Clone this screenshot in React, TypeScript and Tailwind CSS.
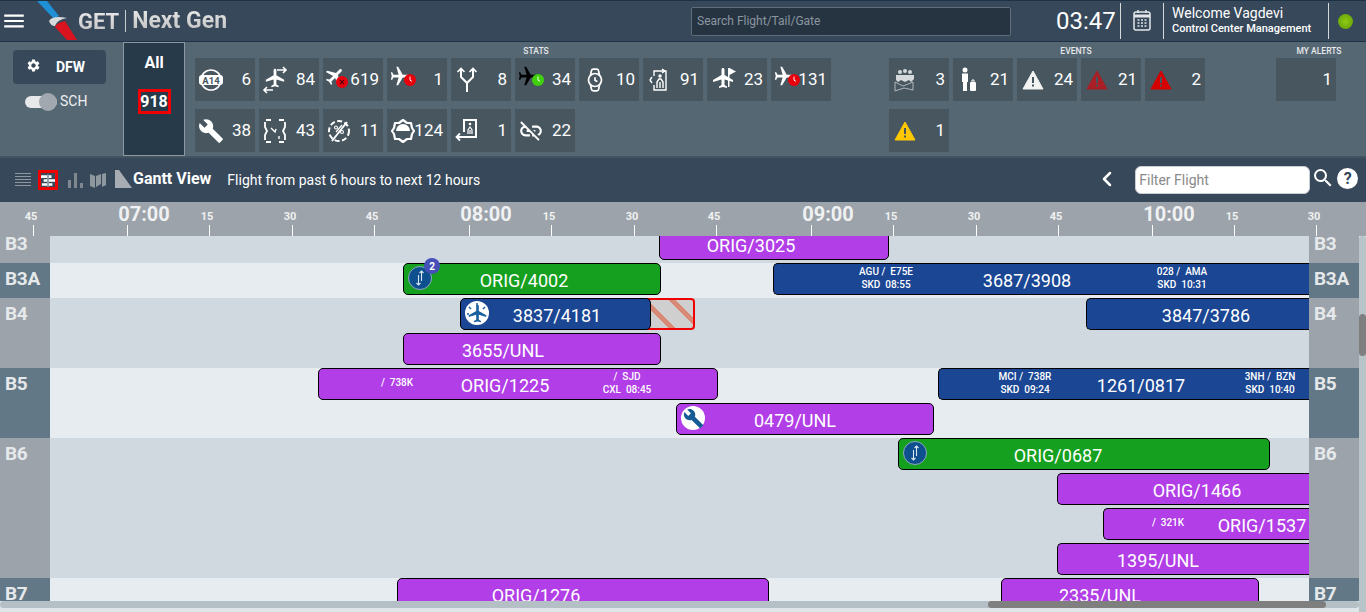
import { ReactNode } from "react";
import { MdBuild, MdLinkOff, MdSearch, MdSettings, MdMenu } from "react-icons/md";
import { ChevronLeft, Watch } from "lucide-react";

const Plane = ({ size, className }: { size: number; className: string }) => (
  <svg width={size} height={size} viewBox="0 0 24 24" className={className} fill="currentColor">
    <path d="M22 16v-2l-8.500-5V3.500C13.500 2.670 12.830 2 12 2s-1.500.670-1.500 1.500V9L2 14v2l8.500-2.500V19L8 20.500V22l4-1 4 1v-1.500L13.500 19v-5.500z" />
  </svg>
);

const PlaneClock = ({ color, planeClass }: { color: string; planeClass: string }) => (
  <div className="relative w-[30px] h-[30px]">
    <Plane size={22} className={`absolute left-[1px] top-0 rotate-90 ${planeClass}`} />
    <svg width="12" height="12" viewBox="0 0 14 14" className="absolute left-[16px] top-[9px]">
      <circle cx="7" cy="7" r="7" fill={color} />
      <path d="M7 3v4.200l2.400 1.400" stroke="#fff" strokeWidth="1.100" fill="none" />
    </svg>
  </div>
);

const A14Icon = () => (
  <svg width="24" height="24" viewBox="0 0 24 24">
    <circle cx="12" cy="12" r="10" fill="none" stroke="#fff" strokeWidth="1.600" />
    <rect x="0" y="7" width="24" height="10" rx="3" fill="#fff" />
    <text x="12" y="15.500" textAnchor="middle" fontSize="9.500" fontWeight="700" fontFamily="Roboto" fill="#46555f">A14</text>
  </svg>
);

const PlaneArrows = () => (
  <div className="relative w-[30px] h-[30px]">
    <Plane size={22} className="absolute left-[4px] top-[2px] text-white" />
    <svg width="30" height="30" viewBox="0 0 30 30" className="absolute left-0 top-0" fill="none" stroke="#fff" strokeWidth="1.600">
      <path d="M17 5h9M23 2l3 3-3 3M13 25H4M7 22l-3 3 3 3" />
    </svg>
  </div>
);

const PlaneCancel = () => (
  <div className="relative w-[30px] h-[30px]">
    <Plane size={22} className="absolute left-0 top-0 rotate-45 text-white" />
    <svg width="12" height="12" viewBox="0 0 14 14" className="absolute left-[12px] top-[11px]">
      <circle cx="7" cy="7" r="7" fill="#e8000c" />
      <path d="M4.600 4.600l4.800 4.800M9.400 4.600l-4.800 4.800" stroke="#4a0005" strokeWidth="1.200" />
    </svg>
  </div>
);

const ForkIcon = () => (
  <svg width="24" height="26" viewBox="0 0 24 26" fill="none" stroke="#fff" strokeWidth="2">
    <path d="M12 25v-9L6 10V3M12 16l6-6V3" />
    <path d="M2.500 5L6 1.500 9.500 5M14.500 5L18 1.500 21.500 5" strokeWidth="1.600" />
  </svg>
);

const DoorArrows = () => (
  <svg width="24" height="24" viewBox="0 0 24 24" fill="none" stroke="#fff" strokeWidth="1.400">
    <path d="M7 8V3h12v19H7v-5M5 9l-2 3 2 3M15 5l3-2-3-2" />
    <circle cx="13" cy="8" r="1.700" fill="#fff" stroke="none" />
    <path d="M10 20v-6l2-3h2l2 3v6M13 14v6" />
  </svg>
);

const PlaneFlag = () => (
  <div className="relative w-[30px] h-[30px]">
    <Plane size={24} className="absolute left-[3px] top-[1px] text-white" />
    <svg width="10" height="19" viewBox="0 0 10 19" className="absolute left-[19px] top-[3px]" fill="#fff">
      <path d="M1 0h1.500v19H1zM2.500 0L9 3.500 2.500 7z" />
    </svg>
  </div>
);

const DashedClock = () => (
  <svg width="24" height="24" viewBox="0 0 24 24" fill="none" stroke="#fff" strokeWidth="2">
    <path d="M3 1h5M16 1h5M3 23h5M16 23h5M2 3v5l2 4-2 4v5M22 3v5l-2 4 2 4v5" strokeWidth="1.800" />
    <path d="M8 9l4 4 1-3M16 17v3" strokeWidth="1.400" />
  </svg>
);

const DashedPercent = () => (
  <svg width="24" height="24" viewBox="0 0 24 24" fill="none" stroke="#fff" strokeWidth="2">
    <circle cx="12" cy="12" r="10" strokeDasharray="5 2.500" />
    <path d="M20 3L5 22" />
    <path d="M9 13l6-7" strokeWidth="1.200" />
    <circle cx="9" cy="8.500" r="1.500" strokeWidth="1.100" />
    <circle cx="15" cy="13" r="1.500" strokeWidth="1.100" />
  </svg>
);

const DashedDome = () => (
  <svg width="24" height="24" viewBox="0 0 24 24" fill="none" stroke="#fff" strokeWidth="2.200">
    <path d="M12 1l4 3h4l1 5 2 3-2 3-1 5h-4l-4 3-4-3H4l-1-5-2-3 2-3 1-5h4z" strokeLinejoin="round" />
    <path d="M5 12a7 7 0 0114 0z" fill="#fff" stroke="none" />
  </svg>
);

const ExitDoor = () => (
  <svg width="24" height="26" viewBox="0 0 24 26" fill="none" stroke="#fff" strokeWidth="2">
    <path d="M9 14V2h12v17H9" />
    <circle cx="15" cy="6" r="1.300" fill="#fff" stroke="none" />
    <path d="M13 16v-4l2-3 2 3v4M15 12v4" strokeWidth="1.200" />
    <path d="M9 19H1.500M5 15.500L1.500 19 5 22.500" strokeWidth="1.800" />
  </svg>
);

const GroupIcon = () => (
  <svg width="24" height="24" viewBox="0 0 24 24" fill="#d5d9dc">
    <circle cx="7" cy="4" r="2" />
    <circle cx="12" cy="3" r="2" />
    <circle cx="17" cy="4" r="2" />
    <path d="M3 7h18v4l-3 3-2-2-4 2-4-2-3 2-2-2z" />
    <path d="M2 14l8 4 10-4v8l-9-2-9 3z" fill="none" stroke="#bcc2c6" strokeWidth="0.900" />
  </svg>
);

const LuggageIcon = () => (
  <svg width="24" height="26" viewBox="0 0 24 26" fill="#fff">
    <circle cx="8" cy="3" r="2.500" />
    <path d="M5 6.500h6v8.500h-1v9H6v-9H5z" />
    <rect x="13" y="15" width="6" height="9" rx="1" />
    <path d="M15 15v-2h2v2" fill="none" stroke="#fff" />
  </svg>
);

const Warning = ({ color }: { color: string }) => (
  <svg width="22" height="20" viewBox="0 0 22 20">
    <path d="M11 1L21 19H1z" fill={color} stroke={color} strokeLinejoin="round" />
    <path d="M10 7h2v6h-2zM10 14.500h2v2h-2z" fill="#46555f" />
  </svg>
);

const Tile = ({ icon, value }: { icon?: ReactNode; value: number }) => (
  <div className="flex items-center w-[60px] h-[43px] bg-[#47565f]">
    <div className="flex items-center justify-center w-[30px] h-full pl-[1px] -mr-[6px] shrink-0">{icon}</div>
    <span className="flex-1 text-right pr-[4px] text-[17px] text-white">{value}</span>
  </div>
);

const statsTiles: { icon: ReactNode; value: number }[] = [
  { icon: <A14Icon />, value: 6 },
  { icon: <PlaneArrows />, value: 84 },
  { icon: <PlaneCancel />, value: 619 },
  { icon: <PlaneClock color="#e8000c" planeClass="text-white" />, value: 1 },
  { icon: <ForkIcon />, value: 8 },
  { icon: <PlaneClock color="#3fd00c" planeClass="text-black" />, value: 34 },
  { icon: <Watch size={26} color="#fff" strokeWidth={1.600} />, value: 10 },
  { icon: <DoorArrows />, value: 91 },
  { icon: <PlaneFlag />, value: 23 },
  { icon: <PlaneClock color="#e8000c" planeClass="text-white" />, value: 131 },
  { icon: <MdBuild className="text-[26px] text-white" />, value: 38 },
  { icon: <DashedClock />, value: 43 },
  { icon: <DashedPercent />, value: 11 },
  { icon: <DashedDome />, value: 124 },
  { icon: <ExitDoor />, value: 1 },
  { icon: <MdLinkOff className="text-[26px] text-white" />, value: 22 },
];

const eventTiles: { icon: ReactNode; value: number }[] = [
  { icon: <GroupIcon />, value: 3 },
  { icon: <LuggageIcon />, value: 21 },
  { icon: <Warning color="#f2f2f2" />, value: 24 },
  { icon: <Warning color="#a81f25" />, value: 21 },
  { icon: <Warning color="#d60000" />, value: 2 },
  { icon: <Warning color="#ffc800" />, value: 1 },
];

const Section = ({ title, className, children }: { title: string; className: string; children: ReactNode }) => (
  <div className={`flex flex-col shrink-0 ${className}`}>
    <div className="h-[16px] pt-[3px] text-center text-[8.500px] leading-[12px] font-medium text-[#e6e8ea]">{title}</div>
    <div className="flex flex-wrap gap-x-1 gap-y-2">{children}</div>
  </div>
);

const Logo = () => (
  <svg width="42" height="42" viewBox="36 0 42 42">
    <path d="M37 1h10l12 15-5 3z" fill="#1f8fd6" />
    <path d="M49 21c2-4 9-5 18-3-6 1-10 3-12 8-3 0-5-2-6-5z" fill="#d7dadc" />
    <path d="M55 27c1-3 5-5 10-6l12 19H67z" fill="#d9141e" />
  </svg>
);

const Header = () => (
  <header className="flex items-center h-[42px] shrink-0 bg-[#36485a] border-y border-[#1d3244]">
    <MdMenu className="ml-[1px] text-[26px] text-white shrink-0" />
    <div className="ml-[9px] shrink-0"><Logo /></div>
    <span className="text-[22px] font-bold bg-linear-to-b from-[#f5f5f5] to-[#b9b9b9] bg-clip-text text-transparent">GET</span>
    <div className="ml-[6px] mr-[6px] w-px h-[22px] bg-[#c8cdd1]" />
    <span className="text-[23px] font-bold bg-linear-to-b from-[#f2f2f2] to-[#b5b5b5] bg-clip-text text-transparent">Next Gen</span>
    <div className="ml-[464px] flex items-center w-[320px] h-[29px] px-[5px] rounded-[2px] border border-[#5f6e7a] bg-[#263442] text-[12px] text-[#8b96a0]">
      Search Flight/Tail/Gate
    </div>
    <span className="ml-[45px] w-[56px] text-[24px] text-white">03:47</span>
    <div className="ml-[8px] w-px h-[36px] bg-[#d5d9dc]" />
    <svg width="42" height="24" viewBox="0 0 42 24" fill="none" className="shrink-0">
      <rect x="13" y="3" width="16" height="18" rx="2" stroke="#e4e6e8" strokeWidth="1.500" />
      <path d="M13 7h16" stroke="#e4e6e8" strokeWidth="3" />
      <path d="M17 1v3M25 1v3" stroke="#e4e6e8" strokeWidth="1.500" />
      <path d="M16.500 11h2M20 11h2M23.500 11h2M16.500 14h2M20 14h2M23.500 14h2M16.500 17h2M20 17h2M23.500 17h2" stroke="#e4e6e8" strokeWidth="1.600" />
    </svg>
    <div className="w-px h-[36px] bg-[#d5d9dc]" />
    <div className="ml-[8px] w-[156px] text-white leading-[15px]">
      <div className="text-[14px]">Welcome Vagdevi</div>
      <div className="text-[11px] font-medium">Control Center Management</div>
    </div>
    <div className="w-px h-[36px] bg-[#d5d9dc]" />
    <div className="ml-[9px] w-[15px] h-[15px] rounded-full bg-[radial-gradient(circle,#8ecb12,#5f9a0a)]" />
  </header>
);

const StatsPanel = () => (
  <section className="flex h-[116px] shrink-0 bg-[#566774] border-b-2 border-[#445362]">
    <div className="flex flex-col items-start w-[123px] pl-[13px] pt-[8px] shrink-0">
      <div className="flex items-center w-[93px] h-[34px] pl-[13px] rounded-[4px] bg-[#36485a] text-white">
        <MdSettings className="text-[15px] -mt-[4px]" />
        <span className="ml-[15px] text-[14px] font-bold">DFW</span>
      </div>
      <div className="flex items-center mt-[7px] ml-[12px]">
        <div className="relative w-[32px] h-[12px] rounded-full bg-[#e6e8ea]">
          <div className="absolute -top-[3px] right-0 w-[18px] h-[18px] rounded-full bg-[#a2a8b0]" />
        </div>
        <span className="ml-[3px] text-[14px] text-[#eef0f2]">SCH</span>
      </div>
    </div>
    <div className="flex flex-col items-center w-[62px] h-[114px] shrink-0 border border-[#8d98a1] bg-[#263a4a] text-white">
      <span className="mt-[8px] text-[16px] leading-[24px] font-bold">All</span>
      <span className="mt-[14px] w-[33px] h-[25px] flex items-center justify-center border-[3px] border-[#f00000] text-[16px] font-bold">918</span>
    </div>
    <Section title="STATS" className="ml-[10px] w-[682px]">
      {statsTiles.map((t, i) => <Tile key={i} icon={t.icon} value={t.value} />)}
    </Section>
    <Section title="EVENTS" className="ml-[12px] w-[374px]">
      {eventTiles.map((t, i) => <Tile key={i} icon={t.icon} value={t.value} />)}
    </Section>
    <Section title="MY ALERTS" className="ml-[13px] w-[86px]">
      <Tile value={1} />
    </Section>
  </section>
);

const Toolbar = () => (
  <div className="flex items-center h-[44px] shrink-0 bg-[#36485a]">
    <svg width="16" height="16" viewBox="0 0 16 16" className="ml-[15px] shrink-0" stroke="#8f979e" strokeWidth="1.100">
      <path d="M0 1.500h16M0 4.500h16M0 7.500h16M0 10.500h16M0 13.500h16" />
    </svg>
    <div className="ml-[7px] flex items-center justify-center w-[20px] h-[20px] border-[3px] border-[#f00000] shrink-0">
      <svg width="14" height="13" viewBox="0 0 16 14" fill="#fff">
        <path d="M0 1h7v3H0zM9 1h3v3H9zM3 5.500h4v3H3zM9 5.500h7v3H9zM1 10h6v3H1zM9 10h4v3H9z" />
        <path d="M7.500 0h1v14h-1z" />
      </svg>
    </div>
    <svg width="16" height="16" viewBox="0 0 16 16" className="ml-[9px] shrink-0" fill="#7f888f">
      <path d="M1 8h3v8H1zM7 1h3v15H7zM13 11h3v5h-3z" />
    </svg>
    <svg width="16" height="16" viewBox="0 0 16 16" className="ml-[7px] shrink-0" fill="#8f979e">
      <path d="M0 2l5 2v12l-5-2zM6 4l5-2v10l-5 3zM12 2l4-1v12l-4 2z" />
    </svg>
    <svg width="17" height="18" viewBox="0 0 17 18" className="ml-[9px] -mt-[2px] shrink-0" fill="#a7adb3">
      <path d="M0 0h4l13 18H0z" />
    </svg>
    <span className="ml-[1px] -mt-[3px] text-[16px] font-bold text-white">Gantt View</span>
    <span className="ml-[16px] text-[14px] text-white">Flight from past 6 hours to next 12 hours</span>
    <ChevronLeft size={24} color="#fff" strokeWidth={2.500} className="ml-[615px] -mt-[3px] shrink-0" />
    <div className="ml-[16px] flex items-center w-[175px] h-[28px] pl-[3px] rounded-[6px] bg-white border border-[#c9ced2] text-[14px] text-[#8a8a8a]">Filter Flight</div>
    <MdSearch className="ml-[1px] text-[24px] text-white -mt-[4px] shrink-0" />
    <div className="ml-[2px] -mt-[3px] flex items-center justify-center w-[21px] h-[21px] rounded-full bg-white text-[16px] font-bold text-[#36485a]">?</div>
  </div>
);

const ticks: { x: number; label: string; hour?: boolean }[] = [
  { x: 33, label: "45" },
  { x: 127, label: "07:00", hour: true },
  { x: 209, label: "15" },
  { x: 292, label: "30" },
  { x: 374, label: "45" },
  { x: 469, label: "08:00", hour: true },
  { x: 551, label: "15" },
  { x: 634, label: "30" },
  { x: 716, label: "45" },
  { x: 811, label: "09:00", hour: true },
  { x: 893, label: "15" },
  { x: 976, label: "30" },
  { x: 1058, label: "45" },
  { x: 1152, label: "10:00", hour: true },
  { x: 1234, label: "15" },
  { x: 1316, label: "30" },
];

const Timeline = () => (
  <div className="relative h-[34px] shrink-0 bg-[#9ca3aa]">
    {ticks.map((t) => (
      <div key={t.x}>
        <div className="absolute top-[23px] w-px h-[11px] bg-white" style={{ left: t.x }} />
        {t.hour ? (
          <span className="absolute top-0 -translate-x-1/2 text-[20px] leading-[24px] font-bold text-[#f0f1f2]" style={{ left: t.x + 17 }}>{t.label}</span>
        ) : (
          <span className="absolute top-[8px] -translate-x-1/2 text-[11px] leading-[13px] font-bold text-[#f0f1f2]" style={{ left: t.x - 2 }}>{t.label}</span>
        )}
      </div>
    ))}
  </div>
);

type Sub = { cx: number; lines: string[] };
type Bar = {
  lane: number;
  from: number;
  to: number;
  color: string;
  text: string;
  cx: number;
  icon?: "transfer" | "plane" | "wrench";
  badge?: boolean;
  subs?: Sub[];
  late?: boolean;
};

const PURPLE = "bg-[#b13ee6]";
const BLUE = "bg-[#1a4694]";
const GREEN = "bg-[#16a01f]";
const LANE_END = 1309;

type Row = { name: string; height: number; dark: boolean; bars: Bar[] };

const rows: Row[] = [
  {
    name: "B3",
    height: 35,
    dark: false,
    bars: [{ lane: 0, from: 659, to: 889, color: PURPLE, text: "ORIG/3025", cx: 751 }],
  },
  {
    name: "B3A",
    height: 35,
    dark: true,
    bars: [
      { lane: 0, from: 403, to: 661, color: GREEN, text: "ORIG/4002", cx: 524, icon: "transfer", badge: true },
      {
        lane: 0, from: 773, to: LANE_END, color: BLUE, text: "3687/3908", cx: 1027,
        subs: [
          { cx: 886, lines: ["AGU /  E75E", "SKD  08:55"] },
          { cx: 1182, lines: ["028 /  AMA", "SKD  10:31"] },
        ],
      },
    ],
  },
  {
    name: "B4",
    height: 70,
    dark: false,
    bars: [
      { lane: 0, from: 460, to: 651, color: BLUE, text: "3837/4181", cx: 557, icon: "plane", late: true },
      { lane: 0, from: 1086, to: LANE_END, color: BLUE, text: "3847/3786", cx: 1206 },
      { lane: 1, from: 403, to: 661, color: PURPLE, text: "3655/UNL", cx: 503 },
    ],
  },
  {
    name: "B5",
    height: 70,
    dark: true,
    bars: [
      {
        lane: 0, from: 318, to: 718, color: PURPLE, text: "ORIG/1225", cx: 505,
        subs: [
          { cx: 397, lines: ["/  738K"] },
          { cx: 627, lines: ["/  SJD", "CXL  08:45"] },
        ],
      },
      {
        lane: 0, from: 938, to: LANE_END, color: BLUE, text: "1261/0817", cx: 1141,
        subs: [
          { cx: 1025, lines: ["MCI /  738R", "SKD  09:24"] },
          { cx: 1270, lines: ["3NH /  BZN", "SKD  10:40"] },
        ],
      },
      { lane: 1, from: 676, to: 934, color: PURPLE, text: "0479/UNL", cx: 795, icon: "wrench" },
    ],
  },
  {
    name: "B6",
    height: 140,
    dark: false,
    bars: [
      { lane: 0, from: 898, to: 1270, color: GREEN, text: "ORIG/0687", cx: 1058, icon: "transfer" },
      { lane: 1, from: 1057, to: LANE_END, color: PURPLE, text: "ORIG/1466", cx: 1197 },
      {
        lane: 2, from: 1103, to: LANE_END, color: PURPLE, text: "ORIG/1537", cx: 1262,
        subs: [{ cx: 1168, lines: ["/  321K"] }],
      },
      { lane: 3, from: 1057, to: LANE_END, color: PURPLE, text: "1395/UNL", cx: 1158 },
    ],
  },
  {
    name: "B7",
    height: 70,
    dark: true,
    bars: [
      { lane: 0, from: 397, to: 769, color: PURPLE, text: "ORIG/1276", cx: 536 },
      { lane: 0, from: 1001, to: 1259, color: PURPLE, text: "2335/UNL", cx: 1100 },
    ],
  },
];

const BarIcon = ({ type }: { type: NonNullable<Bar["icon"]> }) => {
  if (type === "transfer") {
    return (
      <div className="absolute left-[4px] top-[2px] flex items-center justify-center w-[24px] h-[24px] rounded-full bg-[#0e4f8e] border border-[#8fa9bf]">
        <svg width="12" height="16" viewBox="0 0 12 16" fill="none" stroke="#dbe7f0" strokeWidth="1.100">
          <path d="M7.500 1v10M5.500 3l2-2 2 2M4.500 5v10M2.500 13l2 2 2-2" />
        </svg>
      </div>
    );
  }
  if (type === "plane") {
    return (
      <div className="absolute left-[4px] top-[2px] flex items-center justify-center w-[24px] h-[24px] rounded-full bg-white">
        <svg width="24" height="24" viewBox="0 0 24 24" fill="none" stroke="#1a5f9e" strokeWidth="1.500" className="absolute left-0 top-0">
          <path d="M12 2v3M4 6l2 2M20 6l-2 2M2 13h2" />
        </svg>
        <Plane size={21} className="text-[#1a5f9e]" />
      </div>
    );
  }
  return (
    <div className="absolute left-[4px] top-[2px] flex items-center justify-center w-[24px] h-[24px] rounded-full bg-white">
      <MdBuild className="text-[21px] text-[#155b96]" />
    </div>
  );
};

const GanttBar = ({ bar, laneX }: { bar: Bar; laneX: number }) => {
  const cut = bar.to === LANE_END;
  return (
    <>
      {bar.late && (
        <div
          className="absolute h-[32px] rounded-r-[4px] border-2 border-[#f00000] bg-[repeating-linear-gradient(45deg,#cfcfcf_0,#cfcfcf_15px,#d88a76_15px,#d88a76_20px)]"
          style={{ left: bar.to - laneX - 6, width: 50, top: bar.lane * 35 }}
        />
      )}
      <div
        className={`absolute h-[32px] border border-black text-white ${cut ? "rounded-l-[5px] border-r-0" : "rounded-[5px]"} ${bar.color}`}
        style={{ left: bar.from - laneX, width: bar.to - bar.from, top: bar.lane * 35 }}
      >
        {bar.icon && <BarIcon type={bar.icon} />}
        {bar.badge && (
          <div className="absolute left-[20px] -top-[6px] flex items-center justify-center w-[16px] h-[16px] rounded-full bg-[#4450b8] text-[10px] font-bold text-white">2</div>
        )}
        <span className="absolute top-[7px] -translate-x-1/2 whitespace-nowrap text-[18px] leading-[20px]" style={{ left: bar.cx - bar.from - 1 }}>{bar.text}</span>
        {bar.subs?.map((s) => (
          <div
            key={s.cx}
            className={`absolute -translate-x-1/2 whitespace-pre text-center text-[10px] leading-[13px] font-medium ${s.lines.length === 1 ? "top-[7px]" : "top-[1px]"}`}
            style={{ left: s.cx - bar.from - 1 }}
          >
            {s.lines.map((l) => <div key={l}>{l}</div>)}
          </div>
        ))}
      </div>
    </>
  );
};

const RowLabel = ({ row }: { row: Row }) => (
  <div className={`w-[50px] shrink-0 pl-[5px] pt-[8px] text-[19px] leading-[16px] font-bold tracking-[-0.3px] text-[#e6e9eb] ${row.dark ? "bg-[#627886]" : "bg-[#9ca3aa]"}`}>
    {row.name}
  </div>
);

const Gantt = () => (
  <div className="flex flex-1 min-h-0">
    <div className="flex flex-col flex-1 min-w-0">
      <div className="flex-1 min-h-0 overflow-hidden">
        <div className="-mt-[8px]">
          {rows.map((row) => (
            <div key={row.name} className="flex" style={{ height: row.height }}>
              <RowLabel row={row} />
              <div className={`relative flex-1 ${row.dark ? "bg-[#e6ecef]" : "bg-[#cfd9df]"}`}>
                {row.bars.map((bar) => <GanttBar key={bar.text} bar={bar} laneX={50} />)}
              </div>
              <RowLabel row={row} />
            </div>
          ))}
        </div>
      </div>
      <div className="flex h-[7px] shrink-0 mb-[4px] rounded-full bg-[#b5c0c6]">
        <div className="ml-[988px] w-[338px] h-full rounded-full bg-[#7f7f7f]" />
      </div>
    </div>
    <div className="w-[7px] shrink-0 bg-[#b9c4c9] rounded-t-[3px] pt-[78px]">
      <div className="w-full h-[42px] rounded-full bg-[#7f7f7f]" />
    </div>
  </div>
);

const App = () => {
  return (
    <div className="flex flex-col w-[1366px] h-[612px] overflow-hidden bg-[#dfe6e9] font-['Roboto',sans-serif]">
      <Header />
      <StatsPanel />
      <Toolbar />
      <Timeline />
      <Gantt />
    </div>
  );
};

export default App;
